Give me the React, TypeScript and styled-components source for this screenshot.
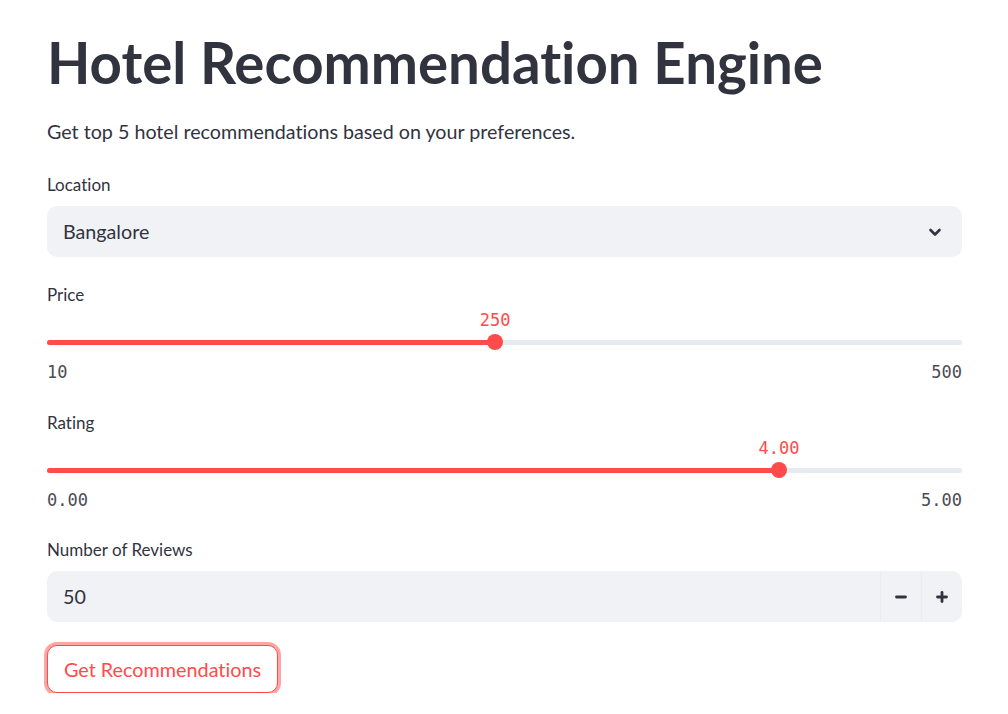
import * as React from 'react';
import styled, { createGlobalStyle } from 'styled-components';

const red = '#ff4b4b';
const ink = '#31333f';
const fieldBg = '#f0f2f6';
const sans = `Lato, "Open Sans", sans-serif`;
const mono = `"DejaVu Sans Mono", "Liberation Mono", monospace`;

const GlobalStyle = createGlobalStyle`
  html, body {
    margin: 0;
    padding: 0;
    background: #ffffff;
  }
  body {
    font-family: ${sans};
    color: ${ink};
    font-variant-ligatures: none;
  }
  button {
    font-variant-ligatures: none;
  }
`;

const Main = styled.main`
  width: 915px;
  padding: 30px 0 0 47px;
  display: flex;
  flex-direction: column;
`;

const Title = styled.h1`
  margin: 0;
  font-size: 56.4px;
  line-height: 64px;
  font-weight: 700;
  color: ${ink};
`;

const Lead = styled.p`
  margin: 24px 0 0;
  font-size: 19.7px;
  line-height: 28px;
`;

const Label = styled.label<{ gap: number }>`
  display: block;
  margin-top: ${(p) => p.gap}px;
  font-size: 17px;
  line-height: 24px;
`;

const Field = styled.div`
  margin-top: 9px;
  height: 51px;
  border-radius: 10px;
  background: ${fieldBg};
  display: flex;
  align-items: center;
  font-size: 19.7px;
`;

const FieldText = styled.span`
  flex: 1;
  padding-left: 16px;
`;

const Caret = styled.svg`
  width: 14px;
  height: 14px;
  margin-right: 20px;
  fill: none;
  stroke: ${ink};
  stroke-width: 2.6;
  stroke-linecap: round;
  stroke-linejoin: round;
`;

const StepButton = styled.button`
  width: 41px;
  height: 100%;
  border: none;
  border-left: 1px solid #eaecf1;
  background: transparent;
  display: flex;
  align-items: center;
  justify-content: center;
  padding: 0;
  color: ${ink};
`;

const StepIcon = styled.svg`
  width: 12px;
  height: 12px;
  fill: none;
  stroke: currentColor;
  stroke-width: 2.8;
  stroke-linecap: round;
`;

const SliderWrap = styled.div`
  position: relative;
  height: 54px;
`;

const Track = styled.div`
  position: absolute;
  left: 0;
  right: 0;
  top: 33px;
  height: 5px;
  border-radius: 3px;
  background: #e6eaf1;
  overflow: hidden;
`;

const Fill = styled.div`
  height: 100%;
  background: ${red};
`;

const Thumb = styled.div`
  position: absolute;
  top: 27px;
  width: 16px;
  height: 16px;
  margin-left: -8px;
  border-radius: 50%;
  background: ${red};
`;

const ThumbValue = styled.div`
  position: absolute;
  top: 2px;
  transform: translateX(-50%);
  font-family: ${mono};
  font-size: 17px;
  line-height: 22px;
  color: ${red};
  white-space: nowrap;
`;

const Ticks = styled.div`
  display: flex;
  justify-content: space-between;
  font-family: ${mono};
  font-size: 17px;
  line-height: 22px;
  color: #4a4c57;
`;

const Submit = styled.button`
  align-self: flex-start;
  margin-top: 23px;
  height: 48px;
  padding: 0 16px;
  border: 1px solid ${red};
  border-radius: 10px;
  background: #fff;
  color: ${red};
  font-family: ${sans};
  font-size: 19.8px;
  box-shadow: 0 0 0 3px rgba(255, 75, 75, 0.5);
`;

interface SliderProps {
  min: number
  max: number
  value: number
  digits: number
}

function Slider({ min, max, value, digits }: SliderProps) {
  const pct = ((value - min) / (max - min)) * 100;
  return (
    <>
      <SliderWrap>
        <ThumbValue style={{ left: `${pct}%` }}>{value.toFixed(digits)}</ThumbValue>
        <Track>
          <Fill style={{ width: `${pct}%` }} />
        </Track>
        <Thumb style={{ left: `${pct}%` }} />
      </SliderWrap>
      <Ticks>
        <span>{min.toFixed(digits)}</span>
        <span>{max.toFixed(digits)}</span>
      </Ticks>
    </>
  );
}

export default function App() {
  return (
    <>
      <GlobalStyle />
      <Main>
        <Title>Hotel Recommendation Engine</Title>
        <Lead>Get top 5 hotel recommendations based on your preferences.</Lead>

        <Label gap={27}>Location</Label>
        <Field>
          <FieldText>Bangalore</FieldText>
          <Caret viewBox="0 0 14 14">
            <polyline points="2.5,5 7,9.5 11.5,5" />
          </Caret>
        </Field>

        <Label gap={26}>Price</Label>
        <Slider min={10} max={500} value={250} digits={0} />

        <Label gap={28}>Rating</Label>
        <Slider min={0} max={5} value={4} digits={2} />

        <Label gap={27}>Number of Reviews</Label>
        <Field>
          <FieldText>50</FieldText>
          <StepButton aria-label="decrement">
            <StepIcon viewBox="0 0 12 12">
              <line x1="1.5" y1="6" x2="10.5" y2="6" />
            </StepIcon>
          </StepButton>
          <StepButton aria-label="increment">
            <StepIcon viewBox="0 0 12 12">
              <line x1="1.5" y1="6" x2="10.5" y2="6" />
              <line x1="6" y1="1.5" x2="6" y2="10.5" />
            </StepIcon>
          </StepButton>
        </Field>

        <Submit>Get Recommendations</Submit>
      </Main>
    </>
  );
}
